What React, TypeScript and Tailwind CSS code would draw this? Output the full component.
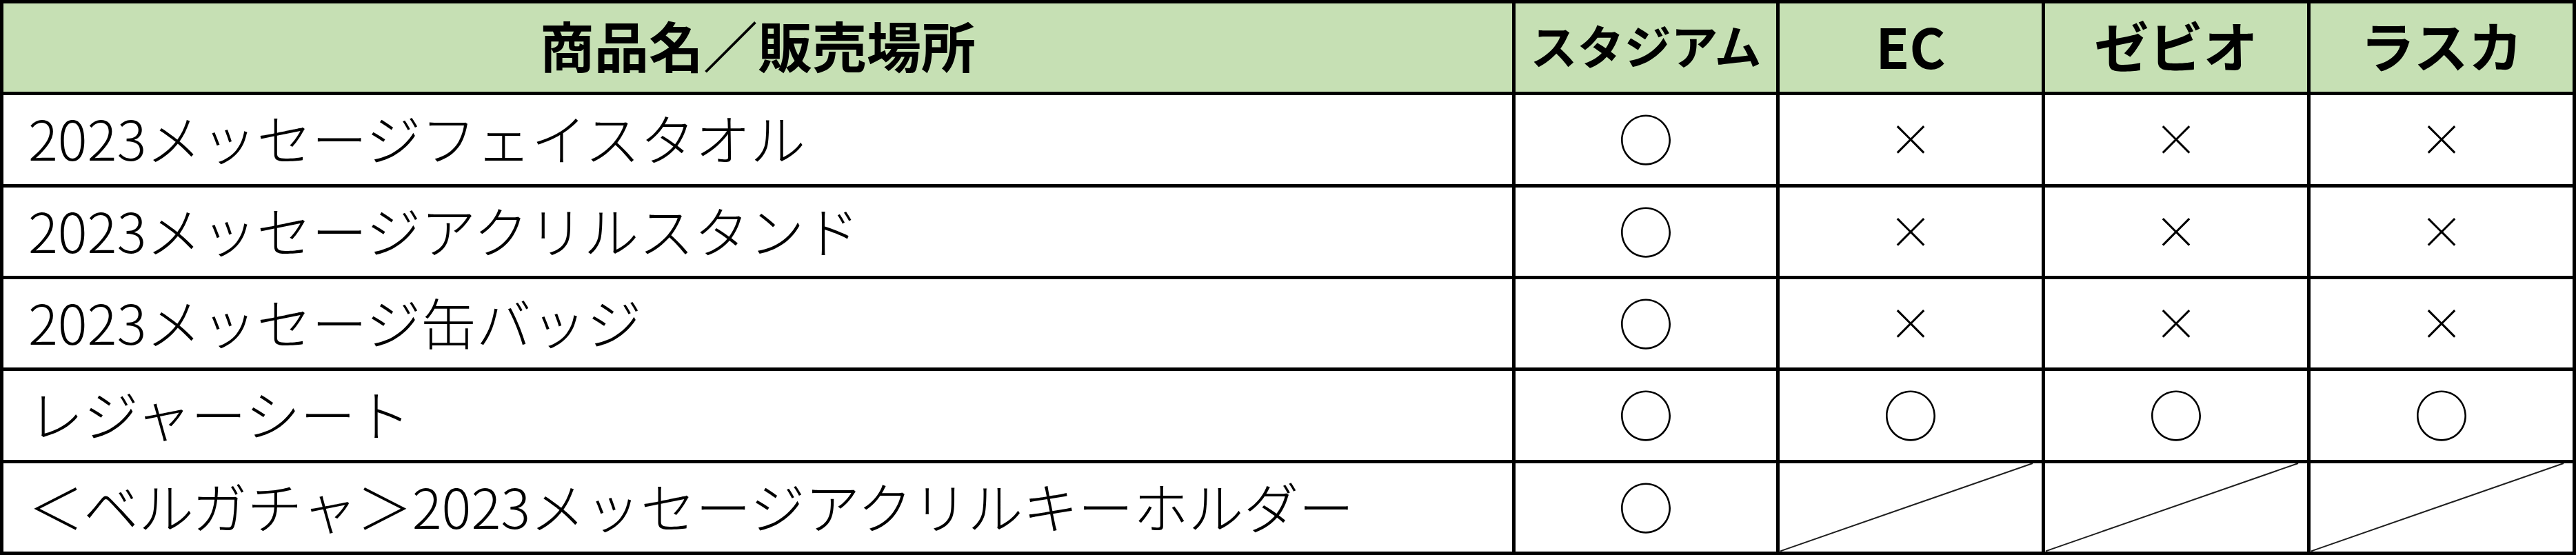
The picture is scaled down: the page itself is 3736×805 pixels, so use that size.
import React from "react";

type Mark = "○" | "×" | null;

const rows: { name: string; marks: Mark[] }[] = [
  { name: "2023メッセージフェイスタオル", marks: ["○", "×", "×", "×"] },
  { name: "2023メッセージアクリルスタンド", marks: ["○", "×", "×", "×"] },
  { name: "2023メッセージ缶バッジ", marks: ["○", "×", "×", "×"] },
  { name: "レジャーシート", marks: ["○", "○", "○", "○"] },
  { name: "＜ベルガチャ＞2023メッセージアクリルキーホルダー", marks: ["○", null, null, null] },
];

function Slash() {
  return (
    <svg className="absolute inset-0 h-full w-full" viewBox="0 0 380 128" preserveAspectRatio="none">
      <line x1="1" y1="127" x2="367" y2="0" stroke="#1f1f1f" strokeWidth="2" vectorEffect="non-scaling-stroke" />
    </svg>
  );
}

export default function App() {
  return (
    <div className="h-[805px] w-[3736px] bg-black p-[5px] font-['Noto_Sans_CJK_JP',sans-serif] text-black">
      <div className="grid h-full grid-cols-[2188px_378px_380px_380px_1fr] grid-rows-[repeat(6,minmax(0,1fr))] gap-[5px]">
        {/* header */}
        <div className="flex items-center justify-center bg-[#c6e0b4] pb-[9px] text-[79px] font-bold leading-none">
          商品名／販売場所
        </div>
        <div className="flex items-center justify-center bg-[#c6e0b4] pb-[9px] text-[68px] font-bold leading-none">
          スタジアム
        </div>
        <div className="flex items-center justify-center bg-[#c6e0b4] pb-[9px] text-[80px] font-bold leading-none">
          EC
        </div>
        <div className="flex items-center justify-center bg-[#c6e0b4] pb-[9px] text-[79px] font-bold leading-none">
          ゼビオ
        </div>
        <div className="flex items-center justify-center bg-[#c6e0b4] pb-[9px] text-[79px] font-bold leading-none">
          ラスカ
        </div>

        {rows.map((row) => (
          <React.Fragment key={row.name}>
            <div className="flex items-center bg-white pb-[8px] pl-[36px] text-[80px] font-light leading-none">
              {row.name}
            </div>
            {row.marks.map((m, i) => (
              <div
                key={i}
                className={
                  m === "×"
                    ? "relative flex items-center justify-center bg-white pb-[8px] text-[64px] font-light leading-none"
                    : "relative flex items-center justify-center bg-white pb-[8px] text-[80px] font-light leading-none"
                }
              >
                {m === null ? <Slash /> : m}
              </div>
            ))}
          </React.Fragment>
        ))}
      </div>
    </div>
  );
}
